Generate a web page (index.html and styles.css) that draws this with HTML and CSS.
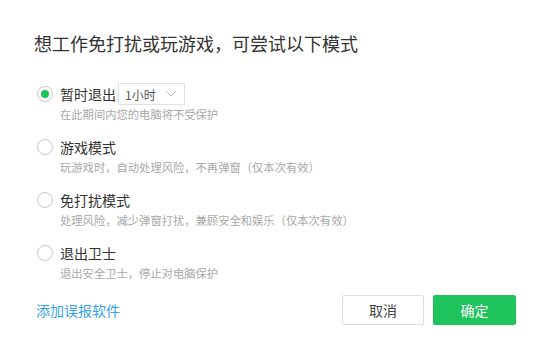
FILE: index.html
```html
<!DOCTYPE html>
<html lang="zh-CN">
<head>
<meta charset="utf-8">
<link rel="stylesheet" href="styles.css">
</head>
<body>
<div class="dialog">
  <h1 class="title">想工作免打扰或玩游戏，可尝试以下模式</h1>
  <div class="options">
    <div class="option">
      <div class="option-head">
        <span class="radio checked"></span>
        <span class="label">暂时退出</span>
        <span class="select">1小时
          <svg class="chev" width="10" height="6" viewBox="0 0 10 6"><path d="M0.5 0.5 L5 5 L9.5 0.5" fill="none" stroke="#b5b5b5" stroke-width="1"/></svg>
        </span>
      </div>
      <div class="desc">在此期间内您的电脑将不受保护</div>
    </div>
    <div class="option">
      <div class="option-head">
        <span class="radio"></span>
        <span class="label">游戏模式</span>
      </div>
      <div class="desc">玩游戏时，自动处理风险，不再弹窗（仅本次有效）</div>
    </div>
    <div class="option">
      <div class="option-head">
        <span class="radio"></span>
        <span class="label">免打扰模式</span>
      </div>
      <div class="desc">处理风险，减少弹窗打扰，兼顾安全和娱乐（仅本次有效）</div>
    </div>
    <div class="option">
      <div class="option-head">
        <span class="radio"></span>
        <span class="label">退出卫士</span>
      </div>
      <div class="desc">退出安全卫士，停止对电脑保护</div>
    </div>
  </div>
  <div class="footer">
    <a class="link">添加误报软件</a>
    <div class="buttons">
      <button class="btn btn-cancel">取消</button>
      <button class="btn btn-ok">确定</button>
    </div>
  </div>
</div>
</body>
</html>
```

FILE: styles.css
```css
html, body {
  margin: 0;
  padding: 0;
  background: #ffffff;
}
body {
  width: 554px;
  height: 338px;
  overflow: hidden;
  font-family: "Noto Sans CJK SC", "Noto Sans", sans-serif;
  color: #333333;
}
.dialog {
  padding: 31px 38px 0 36px;
}
.title {
  margin: 0 0 0 -2px;
  font-size: 18px;
  line-height: 24px;
  font-weight: normal;
  color: #333333;
}
.options {
  margin-top: 28px;
  display: flex;
  flex-direction: column;
  gap: 13px;
}
.option {
  display: flex;
  flex-direction: column;
}
.option-head {
  display: flex;
  align-items: center;
  height: 22px;
}
.radio {
  box-sizing: border-box;
  width: 16px;
  height: 16px;
  margin-left: 1px;
  border: 1px solid #c9c9c9;
  border-radius: 50%;
  display: flex;
  align-items: center;
  justify-content: center;
  flex: none;
}
.radio.checked::after {
  content: "";
  width: 8px;
  height: 8px;
  border-radius: 50%;
  background: #1fc35a;
}
.label {
  margin-left: 7px;
  font-size: 14px;
  line-height: 20px;
  color: #333333;
}
.select {
  box-sizing: border-box;
  margin-left: 2px;
  width: 67px;
  height: 22px;
  border: 1px solid #e2e2e2;
  display: flex;
  align-items: center;
  padding-left: 6px;
  font-size: 12px;
  color: #555555;
}
.chev {
  margin-left: auto;
  margin-right: 8px;
}
.desc {
  margin-left: 24px;
  font-size: 11.3px;
  line-height: 18px;
  color: #a8a8a8;
}
.footer {
  margin-top: 13px;
  display: flex;
  align-items: center;
  justify-content: space-between;
}
.link {
  font-size: 14px;
  color: #36a3e6;
  cursor: pointer;
}
.buttons {
  display: flex;
  gap: 9px;
}
.btn {
  box-sizing: border-box;
  height: 30px;
  width: 82px;
  border-radius: 2px;
  font-family: "Noto Sans CJK SC", "Noto Sans", sans-serif;
  font-size: 14px;
  padding: 0;
}
.btn-cancel {
  background: #ffffff;
  border: 1px solid #dcdcdc;
  color: #444444;
}
.btn-ok {
  width: 83px;
  background: #1fc45c;
  border: 1px solid #1fc45c;
  color: #ffffff;
}
```
